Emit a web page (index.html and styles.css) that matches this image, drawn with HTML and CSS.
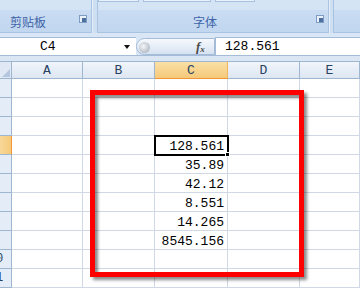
FILE: index.html
```html
<!DOCTYPE html>
<html lang="zh">
<head>
    <meta charset="UTF-8">
    <title>Excel 2007</title>
    <link rel="stylesheet" href="styles.css">
</head>
<body>
    <div class="ribbon">
        <div class="group group-clip">
            <div class="group-top"></div>
            <div class="group-label">
                <span class="label-text clip-text">剪贴板</span>
                <span class="launcher"></span>
            </div>
        </div>
        <div class="group group-font">
            <div class="group-top">
                <span class="tool-box w1"></span>
                <span class="tool-box w2"></span>
                <span class="tool-box w3"></span>
            </div>
            <div class="group-label">
                <span class="label-text font-text">字体</span>
                <span class="launcher"></span>
            </div>
        </div>
        <div class="group group-next">
            <div class="group-top"></div>
            <div class="group-label"></div>
        </div>
    </div>

    <div class="formula-bar">
        <div class="name-box">
            <span class="name-text">C4</span>
            <span class="drop-arrow"></span>
        </div>
        <div class="fx-area">
            <span class="knob"></span>
            <span class="fx">f<sub>x</sub></span>
        </div>
        <div class="formula-input">128.561</div>
    </div>

    <div class="strip"></div>

    <div class="sheet">
        <div class="grid">
            <div class="corner"><span class="corner-tri"></span></div>
            <div class="col-head">A</div>
            <div class="col-head">B</div>
            <div class="col-head col-active">C</div>
            <div class="col-head">D</div>
            <div class="col-head">E</div>

            <div class="row-head"><span>1</span></div>
            <div class="cell"></div><div class="cell"></div><div class="cell"></div><div class="cell"></div><div class="cell"></div>

            <div class="row-head"><span>2</span></div>
            <div class="cell"></div><div class="cell"></div><div class="cell"></div><div class="cell"></div><div class="cell"></div>

            <div class="row-head"><span>3</span></div>
            <div class="cell"></div><div class="cell"></div><div class="cell"></div><div class="cell"></div><div class="cell"></div>

            <div class="row-head row-active"><span>4</span></div>
            <div class="cell"></div><div class="cell"></div><div class="cell num active">128.561<span class="fill-handle"></span></div><div class="cell"></div><div class="cell"></div>

            <div class="row-head"><span>5</span></div>
            <div class="cell"></div><div class="cell"></div><div class="cell num">35.89</div><div class="cell"></div><div class="cell"></div>

            <div class="row-head"><span>6</span></div>
            <div class="cell"></div><div class="cell"></div><div class="cell num">42.12</div><div class="cell"></div><div class="cell"></div>

            <div class="row-head"><span>7</span></div>
            <div class="cell"></div><div class="cell"></div><div class="cell num">8.551</div><div class="cell"></div><div class="cell"></div>

            <div class="row-head"><span>8</span></div>
            <div class="cell"></div><div class="cell"></div><div class="cell num">14.265</div><div class="cell"></div><div class="cell"></div>

            <div class="row-head"><span>9</span></div>
            <div class="cell"></div><div class="cell"></div><div class="cell num">8545.156</div><div class="cell"></div><div class="cell"></div>

            <div class="row-head"><span>10</span></div>
            <div class="cell"></div><div class="cell"></div><div class="cell"></div><div class="cell"></div><div class="cell"></div>

            <div class="row-head"><span>11</span></div>
            <div class="cell"></div><div class="cell"></div><div class="cell"></div><div class="cell"></div><div class="cell"></div>
        </div>

        <div class="red-box"></div>
    </div>
</body>
</html>
```

FILE: styles.css
```css
* {
    margin: 0;
    padding: 0;
    box-sizing: border-box;
}

body {
    width: 360px;
    height: 290px;
    overflow: hidden;
    background-color: #fff;
    font-family: 'Liberation Mono', monospace;
}

/* ribbon */
.ribbon {
    display: flex;
    height: 33px;
    background-color: #cfdff2;
}

.group {
    display: flex;
    flex-direction: column;
    border-right: 1px solid #a9c3e2;
    box-shadow: 1px 0 0 #e6eef9;
}

.group-clip {
    width: 92px;
}

.group-font {
    width: 232px;
    margin-left: 5px;
    border-left: 1px solid #a9c3e2;
}

.group-next {
    flex: 1;
    margin-left: 4px;
    border-left: 1px solid #a9c3e2;
    border-right: none;
}

.group-top {
    display: flex;
    gap: 4px;
    height: 10px;
    background-color: #d5e4f5;
}

.tool-box {
    height: 2px;
    border: 1px solid #a7c1e0;
    border-top: none;
    background-color: #e9f0fa;
}

.w1 { width: 41px; margin-left: 0; }
.w2 { width: 68px; }
.w3 { width: 40px; }

.group-label {
    flex: 1;
    display: flex;
    align-items: center;
    justify-content: space-between;
    padding-right: 4px;
    background: linear-gradient(#c9dcf2, #c1d6ef);
    border-bottom: 1px solid #a9c3e2;
}

.label-text {
    font-family: 'Noto Sans CJK SC', sans-serif;
    font-size: 12px;
    color: #3e64a8;
}

.clip-text {
    padding-left: 10px;
}

.font-text {
    padding-left: 95px;
}

.launcher {
    position: relative;
    width: 8px;
    height: 8px;
    border: 1px solid #7f9cc4;
    background-color: #e8f0fa;
    margin-top: -5px;
}

.launcher::after {
    content: "";
    position: absolute;
    right: 0;
    bottom: 0;
    width: 4px;
    height: 4px;
    background-color: #4d6f9e;
}

/* formula bar */
.formula-bar {
    display: flex;
    height: 23px;
    padding-top: 4px;
    background-color: #d9e6f5;
    border-bottom: 1px solid #a5bcd8;
}

.name-box {
    position: relative;
    width: 136px;
    background-color: #fff;
    border-top: 1px solid #a5bcd8;
    font-size: 13px;
    line-height: 17px;
}

.name-text {
    margin-left: 40px;
}

.drop-arrow {
    position: absolute;
    left: 124px;
    top: 7px;
    border-left: 3px solid transparent;
    border-right: 3px solid transparent;
    border-top: 4px solid #111;
}

.fx-area {
    position: relative;
    width: 79px;
    margin-top: 1px;
    background: linear-gradient(#f6f9fd, #d6e2f1);
    border: 1px solid #a5bcd8;
    border-radius: 9px 0 0 9px;
}

.knob {
    position: absolute;
    left: 2px;
    top: 3px;
    width: 11px;
    height: 11px;
    border-radius: 50%;
    background: radial-gradient(circle at 40% 40%, #f4f6f9, #9ea7b3);
}

.fx {
    position: absolute;
    left: 59px;
    top: 0;
    font-family: 'Liberation Serif', serif;
    font-style: italic;
    font-weight: bold;
    font-size: 13px;
    color: #4a4a4a;
}

.fx sub {
    font-size: 9px;
    vertical-align: -1px;
}

.formula-input {
    flex: 1;
    background-color: #fff;
    border-top: 1px solid #a5bcd8;
    border-left: 1px solid #a5bcd8;
    padding-left: 9px;
    font-size: 13px;
    line-height: 17px;
    color: #000;
}

.strip {
    height: 5px;
    background-color: #dbe6f4;
}

/* sheet */
.sheet {
    position: relative;
}

.grid {
    display: grid;
    grid-template-columns: 12px 71px 72px 73px 72px 60px;
    grid-template-rows: 18px repeat(11, 19px);
}

.corner {
    position: relative;
    background-color: #dfe8f4;
    border-top: 1px solid #9eb6ce;
    border-right: 1px solid #9eb6ce;
    border-bottom: 1px solid #9eb6ce;
}

.corner-tri {
    position: absolute;
    right: 1px;
    bottom: 1px;
    border-left: 8px solid transparent;
    border-bottom: 8px solid #b4c7df;
}

.col-head {
    background: linear-gradient(#f1f5fb, #dde6f2);
    border-top: 1px solid #9eb6ce;
    border-right: 1px solid #9eb6ce;
    border-bottom: 1px solid #9eb6ce;
    text-align: center;
    font-size: 13px;
    line-height: 17px;
    color: #27415f;
}

.col-active {
    background: linear-gradient(#fae0a6, #f5c97a);
    border-bottom: 1px solid #f29536;
    border-right: 1px solid #f2b45c;
}

.row-head {
    overflow: hidden;
    background-color: #e4ecf7;
    border-right: 1px solid #9eb6ce;
    border-bottom: 1px solid #9eb6ce;
    font-size: 12px;
    line-height: 18px;
    color: #27415f;
}

.row-head span {
    display: block;
    width: 32px;
    margin-left: -20px;
    text-align: center;
}

.row-active {
    background: linear-gradient(90deg, #f8d89a, #f5c97a);
    border-right: 1px solid #f29536;
}

.cell {
    border-right: 1px solid #d0d7e5;
    border-bottom: 1px solid #d0d7e5;
}

.num {
    text-align: right;
    padding-right: 3px;
    font-size: 13px;
    line-height: 21px;
    color: #000;
}

.active {
    position: relative;
    outline: 2px solid #000;
    outline-offset: -1px;
}

.fill-handle {
    position: absolute;
    right: -3px;
    bottom: -3px;
    width: 5px;
    height: 5px;
    background-color: #000;
    border: 1px solid #fff;
}

.red-box {
    position: absolute;
    left: 90px;
    top: 29px;
    width: 214px;
    height: 187px;
    border: 5px solid #ff0000;
    box-shadow: 3px 3px 3px rgba(0, 0, 0, 0.45), inset 3px 3px 3px rgba(0, 0, 0, 0.45);
}
```
